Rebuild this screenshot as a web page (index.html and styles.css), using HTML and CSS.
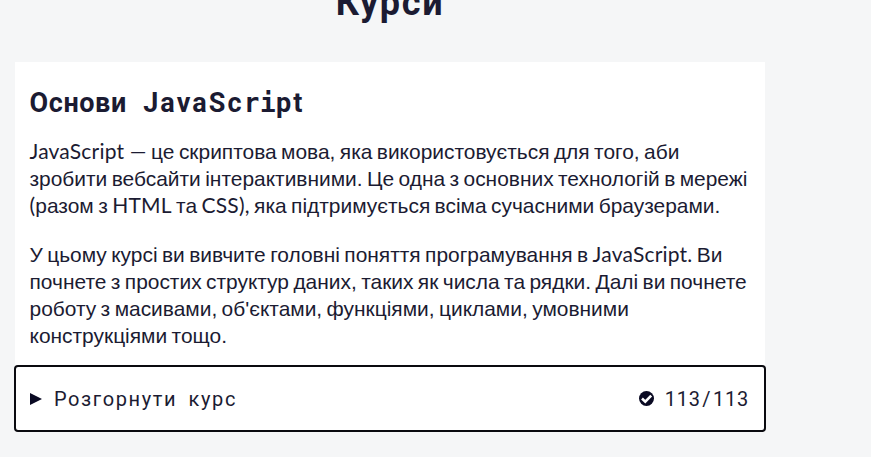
FILE: index.html
```html
<!DOCTYPE html>
<html lang="uk">
<head>
<meta charset="utf-8">
<title>Курси</title>
<link rel="stylesheet" href="styles.css">
</head>
<body>
<main class="page">
<h1 class="page-title">Курси</h1>
<section class="block">
<div class="block-header">
<h2 class="block-title">Основи <span class="title-latin">JavaSc<span class="slab">ri</span>pt</span></h2>
<p class="block-text"><span class="latin">JavaScript —</span> це скриптова мова, яка використовується для того, аби<br>зробити вебсайти інтерактивними. Це одна з основних технологій в мережі<br><span class="latin">(</span>разом з <span class="latin">HTML</span> та <span class="latin">CSS),</span> яка підтримується всіма сучасними браузерами.</p>
<p class="block-text">У цьому курсі ви вивчите головні поняття програмування в <span class="latin">JavaScript.</span> Ви<br>почнете з простих структур даних, таких як числа та рядки. Далі ви почнете<br>роботу з масивами, об'єктами, функціями, циклами, умовними<br>конструкціями тощо.</p>
</div>
<button class="map-title" type="button">
<svg class="caret" viewBox="0 0 12 12"><path d="M0 0L12 6L0 12Z"/></svg>
<span class="map-label">Розгорнути курс</span>
<svg class="check" viewBox="0 0 16 16"><circle cx="8" cy="8" r="8"/><path class="tick" d="M3.2 8L6.7 11.3L13 5"/></svg>
<span class="map-count">113<span class="slash">/</span>113</span>
</button>
</section>
</main>
</body>
</html>
```
FILE: styles.css
```css
* { box-sizing: border-box; }
body { margin: 0; background: #f5f6f7; color: #1b1b32; overflow: hidden; font-family: "Liberation Sans", sans-serif; }
.page { width: 750px; margin-left: 15px; }
.page-title { margin: -22px 0 34px; font: 700 36px/50px Roboto, sans-serif; letter-spacing: 1.7px; text-align: center; }
.block { background: #fff; }
.block-header { padding: 22px 15px 0 14.5px; height: 303px; }
.block-title { margin: 0 0 16px; font: 700 27px/38px Roboto, sans-serif; letter-spacing: .6px; word-spacing: 9px; }
.title-latin { letter-spacing: 2.1px; }
.slab { font-family: "DejaVu Sans Mono", monospace; font-size: 26px; line-height: 1; letter-spacing: .5px; }
.block-text { margin: 0 0 22px; font-size: 20.93px; line-height: 27px; white-space: nowrap; word-spacing: -1.4px; }
.latin { font-family: Lato, sans-serif; font-size: 21px; line-height: 1; letter-spacing: .2px; word-spacing: 0; }
.map-title { display: flex; align-items: center; width: 752px; height: 67px; margin-left: -1px; padding: 0 15px 0 14px; border: 2px solid #0a0a0f; border-radius: 4px; background: #fff; color: #1b1b32; font: 20px/27px Roboto, sans-serif; }
.caret { width: 12px; height: 12px; margin-right: 12px; fill: #0a0a23; }
.map-label { flex: 1; padding-top: 1px; text-align: left; letter-spacing: 1.6px; word-spacing: 5px; }
.check { width: 15px; height: 15px; margin-right: 11px; fill: #0a0a23; }
.tick { fill: none; stroke: #fff; stroke-width: 2.8; }
.map-count { padding-top: 1px; letter-spacing: .8px; }
.slash { display: inline-block; width: 12px; text-align: center; }
```
